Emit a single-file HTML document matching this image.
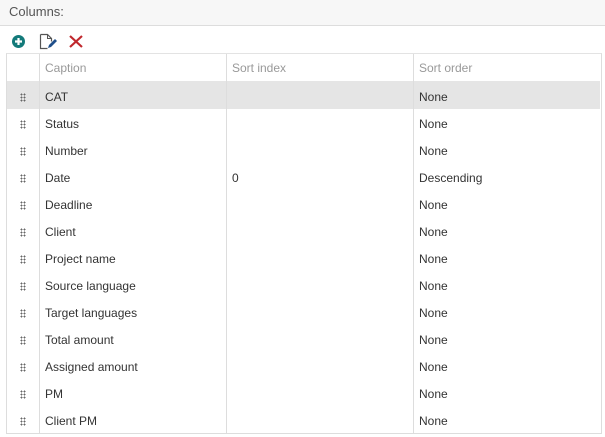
<!DOCTYPE html>
<html><head><style>
body{margin:0;width:605px;height:437px;background:#fff;font-family:"Liberation Sans",sans-serif;font-size:12px;color:#333;position:relative;overflow:hidden}
.top{position:absolute;left:0;top:0;width:605px;height:25px;background:#f7f7f7;border-bottom:1px solid #ddd}
.top span{position:absolute;left:9px;top:4px;font-size:13px;color:#555}
.grid{position:absolute;left:6px;top:53px;width:594px;height:379px;border:1px solid #ddd;border-top:1px solid #e3e3e3}
.row{position:absolute;left:0;width:594px;height:27px}
.c{position:absolute;top:3px;height:27px;line-height:27px}
.hdr .c{top:1px}
.v{position:absolute;top:0;bottom:0;width:1px;background:#ddd}
.hdr .c{color:#999}
.dots{position:absolute;left:13px;top:12px;width:6px;height:9px;background-image:radial-gradient(circle,#666 0.9px,transparent 1px);background-size:3px 3px}
</style></head><body>
<div class="top"><span>Columns:</span></div>
<svg style="position:absolute;left:11px;top:34px" width="15" height="15"><circle cx="7.5" cy="7.5" r="6.5" fill="#137a7a"/><path d="M7.5 4v7M4 7.5h7" stroke="#fff" stroke-width="2.2"/></svg>
<svg style="position:absolute;left:39px;top:33px" width="18" height="17"><path d="M1.5 1.5h7l4 4v3M1.5 1.5v14h7" fill="none" stroke="#555" stroke-width="1.2"/><path d="M8.5 1.5v4h4" fill="none" stroke="#555" stroke-width="1"/><path d="M9 15l1-3 6-6 2 2-6 6z" fill="#1f4f8a"/></svg>
<svg style="position:absolute;left:69px;top:35px" width="14" height="13"><path d="M1 1l12 11M13 1L1 12" stroke="#c0282d" stroke-width="2.2"/></svg>
<div class="grid">
<div class="v" style="left:32px"></div><div class="v" style="left:219px"></div><div class="v" style="left:406px"></div>
<div class="row hdr" style="top:0"><div class="c" style="left:38px">Caption</div><div class="c" style="left:225px">Sort index</div><div class="c" style="left:412px">Sort order</div></div>
<div class="row" style="top:27px;height:28px;background:#e5e5e5;width:593px"></div>
<div class="v" style="left:32px;top:27px;height:28px"></div><div class="v" style="left:219px;top:27px;height:28px"></div><div class="v" style="left:406px;top:27px;height:28px"></div>
<div class="row" style="top:27px"><div class="dots"></div><div class="c" style="left:38px">CAT</div><div class="c" style="left:412px">None</div></div>
<div class="row" style="top:54px"><div class="dots"></div><div class="c" style="left:38px">Status</div><div class="c" style="left:412px">None</div></div>
<div class="row" style="top:81px"><div class="dots"></div><div class="c" style="left:38px">Number</div><div class="c" style="left:412px">None</div></div>
<div class="row" style="top:108px"><div class="dots"></div><div class="c" style="left:38px">Date</div><div class="c" style="left:225px">0</div><div class="c" style="left:412px">Descending</div></div>
<div class="row" style="top:135px"><div class="dots"></div><div class="c" style="left:38px">Deadline</div><div class="c" style="left:412px">None</div></div>
<div class="row" style="top:162px"><div class="dots"></div><div class="c" style="left:38px">Client</div><div class="c" style="left:412px">None</div></div>
<div class="row" style="top:189px"><div class="dots"></div><div class="c" style="left:38px">Project name</div><div class="c" style="left:412px">None</div></div>
<div class="row" style="top:216px"><div class="dots"></div><div class="c" style="left:38px">Source language</div><div class="c" style="left:412px">None</div></div>
<div class="row" style="top:243px"><div class="dots"></div><div class="c" style="left:38px">Target languages</div><div class="c" style="left:412px">None</div></div>
<div class="row" style="top:270px"><div class="dots"></div><div class="c" style="left:38px">Total amount</div><div class="c" style="left:412px">None</div></div>
<div class="row" style="top:297px"><div class="dots"></div><div class="c" style="left:38px">Assigned amount</div><div class="c" style="left:412px">None</div></div>
<div class="row" style="top:324px"><div class="dots"></div><div class="c" style="left:38px">PM</div><div class="c" style="left:412px">None</div></div>
<div class="row" style="top:351px"><div class="dots"></div><div class="c" style="left:38px">Client PM</div><div class="c" style="left:412px">None</div></div>
</div>
</body></html>
